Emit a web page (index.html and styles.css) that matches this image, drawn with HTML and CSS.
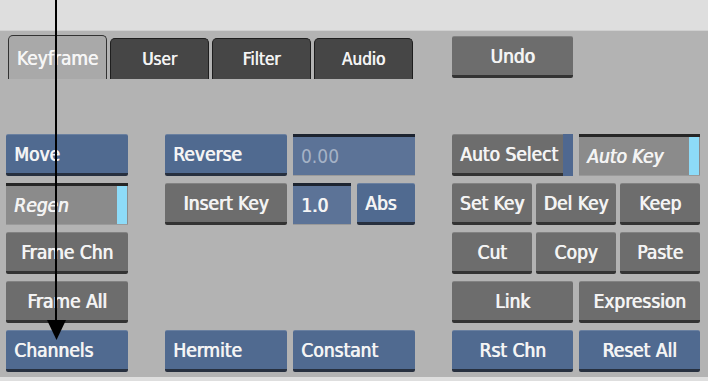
FILE: index.html
```html
<!DOCTYPE html>
<html lang="en">
<head>
    <meta charset="UTF-8">
    <title>Keyframe Controls</title>
    <link rel="stylesheet" href="styles.css">
</head>
<body>
    <div class="topbar"></div>
    <div class="panel">
        <div class="tabs">
            <div class="tab active">Keyframe</div>
            <div class="tab">User</div>
            <div class="tab">Filter</div>
            <div class="tab">Audio</div>
            <div class="btn gray undo">Undo</div>
        </div>

        <div class="controls">
            <div class="col col-left">
                <div class="btn blue left">Move</div>
                <div class="field gray-field italic">Regen<span class="strip"></span></div>
                <div class="btn gray">Frame Chn</div>
                <div class="btn gray">Frame All</div>
                <div class="btn blue left">Channels</div>
            </div>

            <div class="col col-mid">
                <div class="row">
                    <div class="btn blue left w122">Reverse</div>
                    <div class="field blue-field dim w122">0.00</div>
                </div>
                <div class="row">
                    <div class="btn gray w122">Insert Key</div>
                    <div class="field blue-field w58">1.0</div>
                    <div class="btn blue left w58">Abs</div>
                </div>
                <div class="row r5">
                    <div class="btn blue left w122">Hermite</div>
                    <div class="btn blue left w122">Constant</div>
                </div>
            </div>

            <div class="col col-right">
                <div class="row">
                    <div class="btn gray left w121">Auto Select<span class="strip dark"></span></div>
                    <div class="field gray-field italic w121">Auto Key<span class="strip"></span></div>
                </div>
                <div class="row tight">
                    <div class="btn gray w80">Set Key</div>
                    <div class="btn gray w80">Del Key</div>
                    <div class="btn gray w80">Keep</div>
                </div>
                <div class="row tight">
                    <div class="btn gray w80">Cut</div>
                    <div class="btn gray w80">Copy</div>
                    <div class="btn gray w80">Paste</div>
                </div>
                <div class="row">
                    <div class="btn gray w121">Link</div>
                    <div class="btn gray w121">Expression</div>
                </div>
                <div class="row">
                    <div class="btn blue w121">Rst Chn</div>
                    <div class="btn blue w121">Reset All</div>
                </div>
            </div>
        </div>
    </div>
    <div class="bottombar"></div>

    <svg class="pointer" width="708" height="381" viewBox="0 0 708 381">
        <rect x="55" y="0" width="2" height="324" fill="#000"/>
        <polygon points="47,320 66,320 56.5,340" fill="#000"/>
    </svg>
</body>
</html>
```

FILE: styles.css
```css
body { margin: 0; width: 708px; height: 381px; overflow: hidden; background: #dedede; position: relative; font-family: "DejaVu Sans Condensed", "Liberation Sans", sans-serif; color: #f4f4f4; white-space: nowrap; }
.topbar { height: 31px; background: #dedede; border-bottom: 1px solid #d0d0d0; box-sizing: border-box; }
.panel { height: 346px; background: #b3b3b3; }
.bottombar { height: 4px; background: #dedede; }

.tabs { display: flex; align-items: flex-end; height: 48px; padding-left: 8px; box-sizing: border-box; }
.tab { width: 99px; height: 41px; margin-right: 3px; background: #464646; border: 1px solid #1e1e1e; border-bottom: none; border-radius: 5px 5px 0 0; box-sizing: border-box; display: flex; align-items: center; justify-content: center; font-size: 17px; text-shadow: 0.6px 0 0 currentColor; }
.tab.active { height: 44px; background: #a9a9a9; border-color: #333; color: #f6f6f6; font-size: 19px; }
.undo { width: 121px; height: 43px; margin-left: 36px; align-self: flex-start; margin-top: 5px; }

.controls { display: flex; padding: 55px 0 0 6px; }
.col { display: grid; grid-template-rows: repeat(5, 42px); row-gap: 7px; }
.col-left { width: 122px; }
.col-mid { width: 250px; margin-left: 37px; }
.col-right { width: 248px; margin-left: 37px; }
.row { display: flex; gap: 6px; }
.row.tight { gap: 4px; }
.r5 { grid-row: 5; }

.btn { height: 42px; box-sizing: border-box; border-radius: 2px; border-top: 1px solid rgba(255,255,255,0.15); display: flex; align-items: center; justify-content: center; font-size: 19px; text-shadow: 0.8px 0 0 currentColor; position: relative; }
.btn.left { justify-content: flex-start; padding-left: 8px; }
.btn.blue { background: #506a90; border-bottom: 3px solid #27303f; }
.btn.gray { background: #6d6d6d; border-bottom: 3px solid #333; }

.field { height: 42px; box-sizing: border-box; border-top: 3px solid #262626; border-bottom: 1px solid #9a9a9a; display: flex; align-items: center; padding-left: 8px; font-size: 19px; text-shadow: 0.8px 0 0 currentColor; position: relative; }
.gray-field { background: #8b8b8b; }
.blue-field { background: #5c7397; border-top-color: #1d2430; }
.dim { color: #a5b2c6; text-shadow: none; }
.italic { font-style: italic; }

.strip { position: absolute; right: 1px; top: 0; bottom: 0; width: 10px; background: #8ddbf8; }
.strip.dark { background: #4f6890; right: 0; top: -1px; bottom: -3px; }

.w122 { width: 122px; }
.w121 { width: 121px; }
.w80 { width: 80px; }
.w58 { width: 58px; }

.pointer { position: absolute; left: 0; top: 0; pointer-events: none; }
```
